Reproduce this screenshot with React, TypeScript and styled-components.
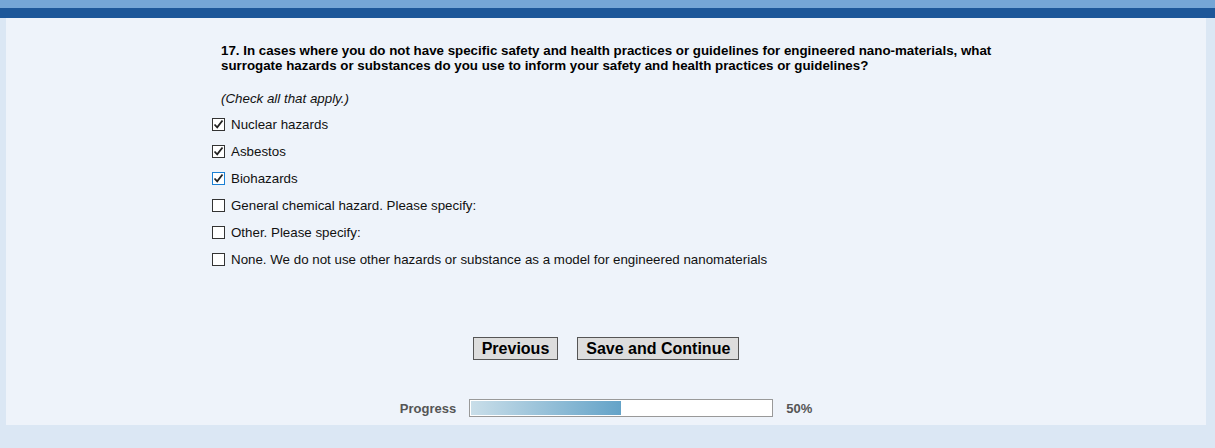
import React from 'react';
import styled, { createGlobalStyle } from 'styled-components';

const GlobalStyle = createGlobalStyle`
  html, body {
    margin: 0;
    padding: 0;
    background: #dbe7f4;
    font-family: "Liberation Sans", Arial, sans-serif;
  }
`;

const TopStripe = styled.div`
  height: 8px;
  background: #75a6d6;
`;

const TopBand = styled.div`
  height: 10px;
  background: #1d5799;
`;

const Panel = styled.main`
  width: 1200px;
  margin: 0 0 0 6px;
  background: #eef3fa;
  padding: 25px 0 8px;
  display: flex;
  flex-direction: column;
  align-items: center;
`;

const Survey = styled.section`
  width: 788px;
  display: flex;
  flex-direction: column;
`;

const Question = styled.h2`
  margin: 0 0 0 9px;
  font-size: 13.33px;
  line-height: 15px;
  font-weight: bold;
  color: #000;
`;

const Note = styled.p`
  margin: 18px 0 5px 9px;
  font-size: 13.33px;
  line-height: 15px;
  font-style: italic;
  color: #111;
`;

const OptionRow = styled.label`
  height: 27px;
  display: flex;
  align-items: center;
  gap: 6px;
  font-size: 13.33px;
  color: #111;
`;

const Box = styled.span<{ $focus?: boolean }>`
  width: 11px;
  height: 11px;
  border: 1px solid ${(p) => (p.$focus ? '#1a7fd4' : '#333')};
  background: #fff;
  display: flex;
  align-items: center;
  justify-content: center;
  flex: none;
`;

const Buttons = styled.div`
  margin-top: 64px;
  display: flex;
  gap: 19px;
`;

const Button = styled.button`
  height: 23px;
  padding: 0 8px;
  border: 1px solid #555;
  background: #dddddd;
  font-family: "Liberation Sans", Arial, sans-serif;
  font-size: 16px;
  font-weight: bold;
  color: #000;
`;

const ProgressRow = styled.div`
  margin-top: 39px;
  display: flex;
  align-items: center;
  gap: 13px;
  font-size: 13px;
  font-weight: bold;
  color: #555;
`;

const Track = styled.div`
  width: 300px;
  height: 14px;
  padding: 1px;
  border: 1px solid #999;
  background: #fff;
  display: flex;
`;

const Fill = styled.div`
  height: 100%;
  background: linear-gradient(to right, #c9dee9, #64a3c8);
`;

const Check = () => (
  <svg width="11" height="11" viewBox="0 0 11 11">
    <path d="M1.5 5.5 L4.2 8.3 L9.5 1.5" fill="none" stroke="#222" strokeWidth="1.8" />
  </svg>
);

const options = [
  { text: 'Nuclear hazards', checked: true },
  { text: 'Asbestos', checked: true },
  { text: 'Biohazards', checked: true, focus: true },
  { text: 'General chemical hazard. Please specify:' },
  { text: 'Other. Please specify:' },
  { text: 'None. We do not use other hazards or substance as a model for engineered nanomaterials' },
];

const progress = 50;

const App: React.FC = () => {
  return (
    <>
      <GlobalStyle />
      <TopStripe />
      <TopBand />
      <Panel>
        <Survey>
          <Question>
            17. In cases where you do not have specific safety and health practices or guidelines for engineered nano-materials, what
            surrogate hazards or substances do you use to inform your safety and health practices or guidelines?
          </Question>
          <Note>(Check all that apply.)</Note>
          {options.map((o) => (
            <OptionRow key={o.text}>
              <Box $focus={o.focus}>{o.checked && <Check />}</Box>
              {o.text}
            </OptionRow>
          ))}
        </Survey>
        <Buttons>
          <Button>Previous</Button>
          <Button>Save and Continue</Button>
        </Buttons>
        <ProgressRow>
          Progress
          <Track>
            <Fill style={{ width: `${progress}%` }} />
          </Track>
          {progress}%
        </ProgressRow>
      </Panel>
    </>
  );
};

export default App;
